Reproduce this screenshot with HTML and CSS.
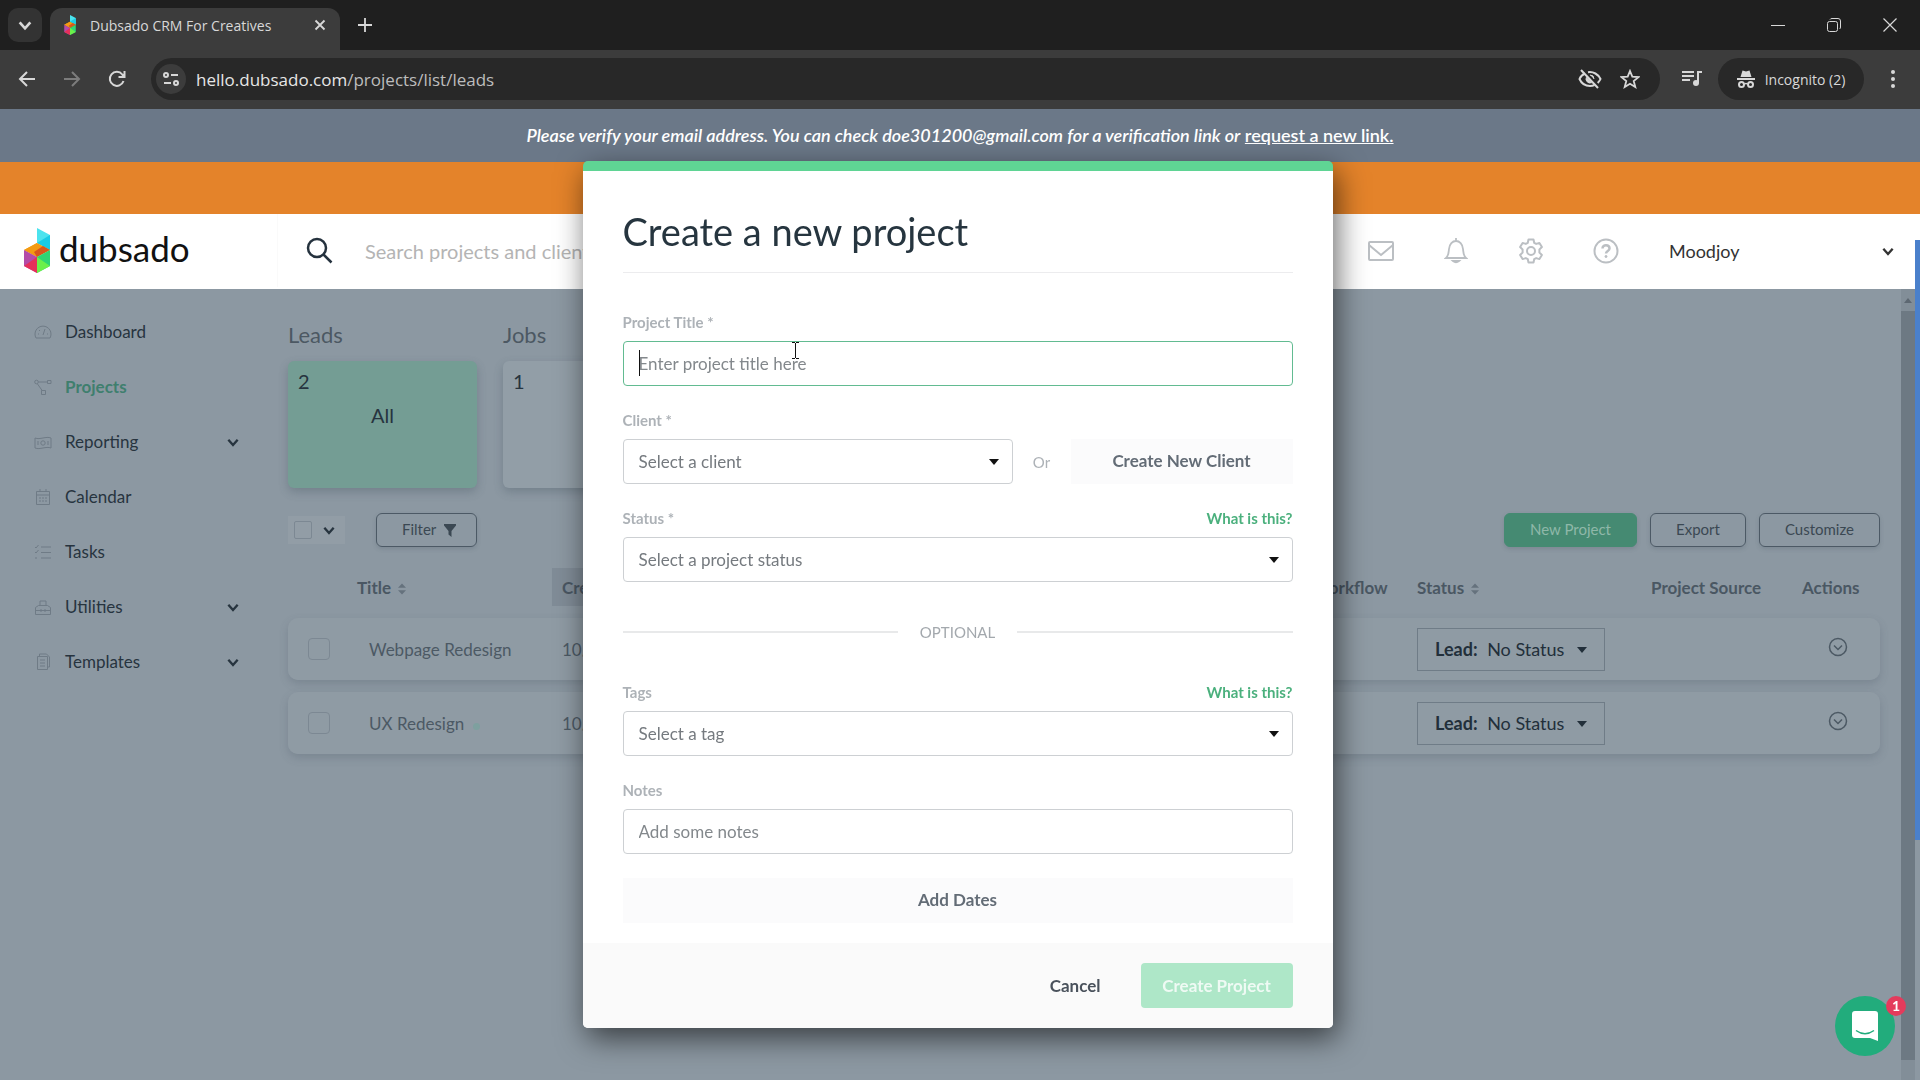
FILE: index.html
```html
<!DOCTYPE html>
<html lang="en">

<head>
    <meta charset="UTF-8">
    <meta name="viewport" content="width=device-width, initial-scale=1.0">
    <title>Dubsado CRM For Creatives</title>
    <link rel="stylesheet" href="styles.css">
</head>

<body>
    <!-- shared icons -->
    <svg class="defs" width="0" height="0" aria-hidden="true">
        <symbol id="chevron" viewBox="0 0 12 12">
            <path d="M2 4l4 4.500 4-4.500" fill="none" stroke="currentColor" stroke-width="2" />
        </symbol>
        <symbol id="logo" viewBox="0 0 26 45">
            <path d="M13 0l13 7v15l-13-7z" fill="#4be3ee" />
            <path d="M13 15L26 7v15z" fill="#19cbe6" />
            <path d="M0 22l13-7v14z" fill="#f5a20c" />
            <path d="M0 22l13-7 13 7-13 7z" fill="#f39a13" />
            <path d="M10 24l9-6 7 4-13 7z" fill="#d9561c" />
            <path d="M0 22l13 7v16L0 38z" fill="#b44ba8" />
            <path d="M0 38l13-9v16z" fill="#e6305a" />
            <path d="M13 29l13-7v16l-13 7z" fill="#2fd573" />
            <path d="M13 29l13 9-13 7z" fill="#6cf04a" />
        </symbol>
        <symbol id="sort" viewBox="0 0 10 14">
            <path d="M0 5.500L5 0l5 5.500zM0 8.500h10L5 14z" fill="currentColor" />
        </symbol>
        <symbol id="circle-down" viewBox="0 0 20 20">
            <circle cx="10" cy="10" r="8.500" fill="none" stroke="currentColor" stroke-width="1.500" />
            <path d="M6 8.500l4 4 4-4" fill="none" stroke="currentColor" stroke-width="1.500" />
        </symbol>
        <symbol id="caret" viewBox="0 0 10 6">
            <path d="M0 0h10L5 6z" fill="currentColor" />
        </symbol>
    </svg>

    <!-- browser window -->
    <div class="tabs">
        <button class="tab-search" aria-label="Search tabs"><svg width="16" height="16"><use href="#chevron" /></svg></button>
        <div class="tab">
            <svg class="favicon" width="12" height="20"><use href="#logo" /></svg>
            <span class="tab-title">Dubsado CRM For Creatives</span>
            <button class="icon-btn" aria-label="Close tab">
                <svg width="12" height="12" viewBox="0 0 12 12"><path d="M1.500 1.500l9 9M10.500 1.500l-9 9" stroke="currentColor" stroke-width="1.800" /></svg>
            </button>
        </div>
        <button class="icon-btn new-tab" aria-label="New tab">
            <svg width="14" height="14" viewBox="0 0 14 14"><path d="M7 0v14M0 7h14" stroke="currentColor" stroke-width="1.800" /></svg>
        </button>
        <div class="window-btns">
            <button class="icon-btn" aria-label="Minimize"><svg width="14" height="14" viewBox="0 0 14 14"><path d="M0 7.500h14" stroke="currentColor" /></svg></button>
            <button class="icon-btn" aria-label="Restore">
                <svg width="14" height="14" viewBox="0 0 14 14" fill="none" stroke="currentColor"><rect x=".5" y="3.500" width="10" height="10" rx="2" /><path d="M3 1.500Q3.500.500 5 .500h6q2.500 0 2.500 2.500v6q0 1.500-1 2" /></svg>
            </button>
            <button class="icon-btn" aria-label="Close"><svg width="14" height="14" viewBox="0 0 14 14"><path d="M.5.5l13 13M13.500.5l-13 13" stroke="currentColor" stroke-width="1.200" /></svg></button>
        </div>
    </div>
    <div class="toolbar">
        <button class="icon-btn" aria-label="Back">
            <svg width="18" height="16" viewBox="0 0 18 16" fill="none" stroke="currentColor" stroke-width="2"><path d="M17 8H2M9 1L2 8l7 7" /></svg>
        </button>
        <button class="icon-btn dim" aria-label="Forward" disabled>
            <svg width="18" height="16" viewBox="0 0 18 16" fill="none" stroke="currentColor" stroke-width="2"><path d="M1 8h15M9 1l7 7-7 7" /></svg>
        </button>
        <button class="icon-btn" aria-label="Reload">
            <svg width="18" height="18" viewBox="0 0 18 18" fill="none" stroke="currentColor" stroke-width="2"><path d="M15.500 11a7 7 0 1 1-1.200-6.500L16 6.500M16.500 1v6h-6" /></svg>
        </button>
        <div class="address">
            <button class="site-info" aria-label="View site information">
                <svg width="16" height="14" viewBox="0 0 16 14" fill="none" stroke="currentColor" stroke-width="2"><circle cx="3" cy="3" r="2" /><path d="M8 3h7M1 11h7" /><circle cx="13" cy="11" r="2" /></svg>
            </button>
            <span class="url"><b>hello.dubsado.com</b>/projects/list/leads</span>
            <button class="icon-btn" aria-label="Third-party cookies blocked">
                <svg width="24" height="22" viewBox="0 0 24 22" fill="none" stroke="currentColor" stroke-width="2"><path d="M7 5.500C4.500 6.500 2.500 8.500 1.500 11c2 4.500 6 7 10.500 7 1.500 0 3-.3 4.500-1M10 4.200c5.300-.8 10.300 2 12.500 6.800-.6 1.500-1.600 2.800-2.800 3.900" /><path d="M12 7a4 4 0 0 1 4 4M8.300 9.500A4 4 0 0 0 13.500 14.700L8.300 9.500z" fill="currentColor" stroke-width="1" /><path d="M3 2l17 18" /></svg>
            </button>
            <button class="icon-btn" aria-label="Bookmark this tab">
                <svg width="20" height="20" viewBox="0 0 20 20" fill="none" stroke="currentColor" stroke-width="1.800"><path d="M10 2l2.300 5.700 6.200.4-4.800 3.900 1.600 6-5.300-3.300-5.300 3.300 1.600-6L1.500 8.100l6.200-.4z" /></svg>
            </button>
        </div>
        <button class="icon-btn media" aria-label="Media controls">
            <svg width="20" height="18" viewBox="0 0 20 18"><path d="M0 2h12M0 6h12M0 10h8M16 13V2h4" fill="none" stroke="currentColor" stroke-width="2" /><circle cx="14" cy="13" r="3" fill="currentColor" /></svg>
        </button>
        <button class="incognito">
            <svg width="18" height="18" viewBox="0 0 18 18"><path d="M0 8h18v2H0zM3.500 7L5.500.500l3.500 1 3.500-1L14.500 7z" fill="currentColor" /><path d="M7.500 14q1.500-1 3 0" fill="none" stroke="currentColor" stroke-width="1.500" /><circle cx="4.500" cy="14.500" r="2.500" fill="none" stroke="currentColor" stroke-width="2" /><circle cx="13.500" cy="14.500" r="2.500" fill="none" stroke="currentColor" stroke-width="2" /></svg>
            Incognito (2)
        </button>
        <button class="icon-btn" aria-label="Menu">
            <svg width="4" height="18" viewBox="0 0 4 18" fill="currentColor"><circle cx="2" cy="2" r="2" /><circle cx="2" cy="9" r="2" /><circle cx="2" cy="16" r="2" /></svg>
        </button>
    </div>

    <!-- app -->
    <div class="verify"><span><em>Please verify your email address. You can check doe301200@gmail.com for a verification link or</em> <a href="#">request a new link.</a></span></div>
    <div class="notice"></div>
    <header class="header">
        <a class="brand" href="#">
            <svg width="26" height="45"><use href="#logo" /></svg>
            <span>dubsado</span>
        </a>
        <div class="search">
            <svg width="27" height="27" viewBox="0 0 27 27" fill="none" stroke="#25323e" stroke-width="2.500"><circle cx="11" cy="11" r="9" /><path d="M17.500 17.500l8 8" /></svg>
            <input type="text" placeholder="Search projects and clients" aria-label="Search projects and clients">
        </div>
        <nav class="header-icons">
            <a href="#" aria-label="Mail">
                <svg width="26" height="20" viewBox="0 0 26 20" fill="none" stroke="currentColor" stroke-width="2"><rect x="1" y="1" width="24" height="18" rx="1" /><path d="M1 4l12 10L25 4" /></svg>
            </a>
            <a href="#" aria-label="Notifications">
                <svg width="24" height="26" viewBox="0 0 24 26" fill="none" stroke="currentColor" stroke-width="1.800"><path d="M12 0v3M2 20c2.500-2 2.500-4.500 3-9 .4-5 3.500-8 7-8s6.600 3 7 8c.5 4.500.5 7 3 9z" /><path d="M9 23q3 2.500 6 0z" fill="currentColor" /></svg>
            </a>
            <a href="#" aria-label="Settings">
                <svg width="26" height="26" viewBox="0 0 26 26" fill="none" stroke="currentColor" stroke-width="2" stroke-linejoin="round"><circle cx="13" cy="13" r="4" /><path d="M10.500 1.500h5l.7 3.300 2 1.100 3.200-1 2.500 4.200-2.500 2.300v3.200l2.500 2.300-2.500 4.200-3.200-1-2 1.100-.7 3.300h-5l-.7-3.300-2-1.100-3.200 1-2.500-4.200 2.500-2.300v-3.200L2.100 9.100l2.500-4.200 3.200 1 2-1.100z" /></svg>
            </a>
            <a href="#" aria-label="Help">
                <svg width="26" height="26" viewBox="0 0 26 26" fill="none" stroke="currentColor" stroke-width="2"><circle cx="13" cy="13" r="11.500" /><path d="M9.500 10.500c0-4.500 7-4.300 7 0 0 2.500-3.500 2.500-3.500 5" stroke-width="2.500" /><circle cx="13" cy="18.500" r="1" fill="currentColor" stroke-width="1" /></svg>
            </a>
        </nav>
        <button class="account">Moodjoy <svg width="14" height="14"><use href="#chevron" /></svg></button>
    </header>

    <div class="app">
        <nav class="sidebar">
            <a href="#"><svg width="18" height="18" viewBox="0 0 18 18"><path d="M2 15a8 8 0 1 1 14 0zM9 12l2-6M4 11h1M5 7l1 1M13 11h1" /></svg><span>Dashboard</span></a>
            <a href="#" class="active"><svg width="18" height="18" viewBox="0 0 18 18"><circle cx="2.500" cy="4" r="1.800" /><path d="M4.500 4H14M3.500 6l5 7M13.500 2.500h3.500v3h-3.500zM7.500 12.500h4v4h-4z" /></svg><span>Projects</span></a>
            <a href="#"><svg width="18" height="18" viewBox="0 0 18 18"><path d="M1 5c5 2 11-2 16 0v10c-5-2-11 2-16 0z" /><circle cx="9" cy="10" r="2.200" /><path d="M4 8v4M14 8v4" /></svg><span>Reporting</span><svg class="arrow"><use href="#chevron" /></svg></a>
            <a href="#"><svg width="18" height="18" viewBox="0 0 18 18"><path d="M2.500 3.500h13v13h-13zM2.500 7h13M6 1v3M12 1v3M5 10h2M8 10h2M11 10h2M5 13h2M8 13h2M11 13h2" /></svg><span>Calendar</span></a>
            <a href="#"><svg width="18" height="18" viewBox="0 0 18 18"><path d="M1 4l1 1 2.500-3M1 9l1 1 2.500-3M1 15h2M7 4h10M7 9.500h10M7 15h10" /></svg><span>Tasks</span></a>
            <a href="#"><svg width="18" height="18" viewBox="0 0 18 18"><path d="M1.500 16.500h15v-7l-3-2h-9l-3 2zM1 12.500h16M6 7V3h6v4M7 11v3M11 11v3" /></svg><span>Utilities</span><svg class="arrow"><use href="#chevron" /></svg></a>
            <a href="#"><svg width="18" height="18" viewBox="0 0 18 18"><path d="M3.500 3.500v13h10v-13zM5.500 3V1h7l3 3v10h-2M6 7h5M6 10h5M6 13h5" /></svg><span>Templates</span><svg class="arrow"><use href="#chevron" /></svg></a>
        </nav>

        <main class="content">
            <div class="groups">
                <section>
                    <h2>Leads</h2>
                    <div class="stage selected"><span>2</span><b>All</b></div>
                </section>
                <section>
                    <h2>Jobs</h2>
                    <div class="stage"><span>1</span></div>
                </section>
            </div>

            <div class="actions">
                <div class="bulk">
                    <input type="checkbox" aria-label="Select all">
                    <svg width="14" height="14"><use href="#chevron" /></svg>
                </div>
                <button class="btn filter">Filter
                    <svg width="12" height="13" viewBox="0 0 12 13"><path d="M0 0h12v1.500L7.500 7v6l-3-2.500V7L0 1.500z" fill="currentColor" /></svg>
                </button>
                <div class="spacer"></div>
                <button class="btn primary">New Project</button>
                <button class="btn">Export</button>
                <button class="btn">Customize</button>
            </div>

            <table class="projects">
                <colgroup>
                    <col class="c-check">
                    <col class="c-title">
                    <col class="c-date">
                    <col>
                    <col class="c-flow">
                    <col class="c-status">
                    <col class="c-source">
                    <col class="c-actions">
                </colgroup>
                <thead>
                    <tr>
                        <th></th>
                        <th class="title">Title <svg width="8" height="12"><use href="#sort" /></svg></th>
                        <th class="sorted">Created</th>
                        <th></th>
                        <th>Workflow</th>
                        <th>Status <svg width="8" height="12"><use href="#sort" /></svg></th>
                        <th>Project Source</th>
                        <th>Actions</th>
                    </tr>
                </thead>
                <tbody>
                    <tr>
                        <td><input type="checkbox" aria-label="Select Webpage Redesign"></td>
                        <td class="title">Webpage Redesign</td>
                        <td>10/</td>
                        <td></td>
                        <td></td>
                        <td><button class="status"><b>Lead:</b> No Status <svg width="10" height="6"><use href="#caret" /></svg></button></td>
                        <td></td>
                        <td class="more"><button aria-label="Actions"><svg width="20" height="20"><use href="#circle-down" /></svg></button></td>
                    </tr>
                    <tr>
                        <td><input type="checkbox" aria-label="Select UX Redesign"></td>
                        <td class="title">UX Redesign <i class="dot"></i></td>
                        <td>10/</td>
                        <td></td>
                        <td></td>
                        <td><button class="status"><b>Lead:</b> No Status <svg width="10" height="6"><use href="#caret" /></svg></button></td>
                        <td></td>
                        <td class="more"><button aria-label="Actions"><svg width="20" height="20"><use href="#circle-down" /></svg></button></td>
                    </tr>
                </tbody>
            </table>
        </main>

        <div class="scrollbar"><svg width="8" height="5"><path d="M0 5l4-5 4 5z" fill="#5d6872" /></svg><div></div></div>
    </div>
    <div class="page-scroll"></div>

    <button class="chat" aria-label="Open chat">
        <svg width="28" height="30" viewBox="0 0 28 30"><path d="M4 0h20a3 3 0 0 1 3 3v27l-8-3H4a3 3 0 0 1-3-3V3a3 3 0 0 1 3-3z" fill="#fff" /><path d="M5 19.500q9 6.500 18 0" fill="none" stroke="#22ac7c" stroke-width="1.500" /></svg>
        <span>1</span>
    </button>

    <!-- new project dialog -->
    <div class="overlay">
        <form class="modal" role="dialog" aria-labelledby="modal-title">
            <div class="modal-body">
                <h1 id="modal-title">Create a new project</h1>

                <div class="field">
                    <div class="field-head"><label for="title">Project Title *</label></div>
                    <div class="text-wrap">
                        <input class="control focused" type="text" id="title" placeholder="Enter project title here">
                        <i class="text-caret"></i>
                        <svg class="pointer" width="7" height="17" viewBox="0 0 7 17"><path d="M0 .500h3M4 .500h3M3.500 1v15M0 16.500h3M4 16.500h3" stroke="#111" /></svg>
                    </div>
                </div>

                <div class="field">
                    <div class="field-head"><label for="client">Client *</label></div>
                    <div class="client-row">
                        <select class="control" id="client"><option>Select a client</option></select>
                        <span>Or</span>
                        <button type="button" class="light-btn">Create New Client</button>
                    </div>
                </div>

                <div class="field">
                    <div class="field-head"><label for="status">Status *</label><a href="#">What is this?</a></div>
                    <select class="control" id="status"><option>Select a project status</option></select>
                </div>

                <div class="optional">OPTIONAL</div>

                <div class="field">
                    <div class="field-head"><label for="tags">Tags</label><a href="#">What is this?</a></div>
                    <select class="control" id="tags"><option>Select a tag</option></select>
                </div>

                <div class="field">
                    <div class="field-head"><label for="notes">Notes</label></div>
                    <input class="control" type="text" id="notes" placeholder="Add some notes">
                </div>

                <button type="button" class="light-btn">Add Dates</button>
            </div>
            <div class="modal-footer">
                <button type="button" class="cancel">Cancel</button>
                <button type="submit" class="create" disabled>Create Project</button>
            </div>
        </form>
    </div>
</body>

</html>
```
FILE: styles.css
```css
* {
    margin: 0;
    padding: 0;
    box-sizing: border-box;
}

body {
    display: flex;
    flex-direction: column;
    height: 100vh;
    overflow: hidden;
    font-family: Lato, "Open Sans", sans-serif;
    font-size: 18px;
    color: #27343f;
    background: #8c98a2;
}

button,
input,
select {
    font: inherit;
    color: inherit;
    border: 0;
    background: none;
}

a {
    color: inherit;
    text-decoration: none;
}

svg {
    flex-shrink: 0;
}

.defs {
    position: absolute;
}

/* browser window */
.tabs,
.toolbar {
    display: flex;
    align-items: center;
    flex-shrink: 0;
    font-family: "Open Sans", "Noto Sans", sans-serif;
    color: #d8d8d8;
}

.tabs {
    height: 50px;
    padding: 8px 0 0 8px;
    background: #1f1f1f;
    font-size: 14px;
}

.tab-search {
    display: flex;
    align-items: center;
    justify-content: center;
    width: 34px;
    height: 34px;
    margin: 0 8px 8px 0;
    border-radius: 10px;
    background: #333;
}

.tab {
    display: flex;
    align-items: center;
    width: 290px;
    height: 42px;
    padding: 0 14px 8px;
    border-radius: 12px 12px 0 0;
    background: #3c3c3c;
}

.tab-title {
    flex: 1;
    padding-left: 14px;
    white-space: nowrap;
}

.icon-btn {
    display: flex;
    align-items: center;
    justify-content: center;
}

.new-tab {
    margin: 0 0 8px 18px;
}

.window-btns {
    display: flex;
    gap: 42px;
    margin: 0 23px 8px auto;
}

.toolbar {
    height: 59px;
    padding: 0 25px 1px 18px;
    gap: 27px;
    background: #3c3c3c;
}

.dim {
    color: #7c7c7c;
}

.address {
    display: flex;
    align-items: center;
    flex: 1;
    height: 42px;
    gap: 18px;
    margin-left: -2px;
    padding: 0 20px 0 5px;
    border-radius: 21px;
    background: #282828;
    font-size: 17px;
}

.site-info {
    display: flex;
    align-items: center;
    justify-content: center;
    width: 30px;
    height: 30px;
    border-radius: 50%;
    background: #3c3c3c;
}

.url {
    flex: 1;
    margin-left: -8px;
    color: #bdbdbd;
}

.url b {
    font-weight: 400;
    color: #e6e6e6;
}

.media {
    margin-left: -5px;
    margin-right: -11px;
}

.incognito {
    display: flex;
    align-items: center;
    justify-content: center;
    gap: 10px;
    width: 146px;
    height: 42px;
    border-radius: 21px;
    background: #282828;
    font-size: 14px;
}

/* banners */
.verify {
    display: flex;
    align-items: center;
    justify-content: center;
    flex-shrink: 0;
    height: 53px;
    padding-bottom: 2px;
    background: #6b7888;
    color: #fff;
    font-weight: 600;
}

.verify a {
    text-decoration: underline;
}

.notice {
    flex-shrink: 0;
    height: 52px;
    background: #e4832a;
}

/* header */
.header {
    display: flex;
    align-items: center;
    flex-shrink: 0;
    height: 75px;
    padding: 0 5px 2px 0;
    background: #fff;
}

.brand {
    display: flex;
    align-items: center;
    gap: 9px;
    width: 278px;
    height: 100%;
    padding-left: 24px;
    border-right: 1px solid #fafafa;
    font-size: 35px;
    color: #111;
}

.brand span {
    padding-bottom: 6px;
}

.search {
    display: flex;
    align-items: center;
    flex: 1;
    gap: 32px;
    padding-left: 28px;
}

.search input {
    flex: 1;
    font-size: 20px;
}

.search input::placeholder {
    color: #b4b4b4;
}

.header-icons {
    display: flex;
    color: #bbbfc3;
}

.header-icons a {
    display: flex;
    align-items: center;
    justify-content: center;
    width: 75px;
}

.account {
    display: flex;
    align-items: center;
    justify-content: space-between;
    width: 272px;
    padding: 0 20px 0 26px;
    color: #333;
}

/* page */
.app {
    display: flex;
    flex: 1;
    min-height: 0;
    padding-right: 5px;
}

.sidebar {
    display: flex;
    flex-direction: column;
    width: 288px;
    padding: 15px 48px 0 34px;
}

.sidebar a {
    display: flex;
    align-items: center;
    gap: 13px;
    height: 55px;
    font-size: 17px;
}

.sidebar svg {
    fill: none;
    stroke: #6f7b86;
    stroke-width: 1;
}

.sidebar span {
    flex: 1;
}

.sidebar .arrow {
    width: 14px;
    height: 14px;
}

.sidebar .active {
    color: #3f7f6e;
    font-weight: 700;
}

.content {
    flex: 1;
    padding: 30px 21px 0 0;
}

.groups {
    display: flex;
    gap: 26px;
}

.groups h2 {
    height: 42px;
    line-height: 32px;
    font-size: 22px;
    font-weight: 400;
    color: #4c5863;
}

.stage {
    display: flex;
    flex-direction: column;
    align-items: center;
    gap: 10px;
    width: 189px;
    height: 127px;
    padding: 8px 10px;
    border-radius: 6px;
    background: #929ea7;
    box-shadow: 0 4px 10px rgba(60, 75, 90, .3);
    font-size: 20px;
}

.stage span {
    align-self: flex-start;
}

.stage b {
    font-weight: 400;
}

.stage.selected {
    background: #749d94;
}

.actions {
    display: flex;
    align-items: center;
    gap: 13px;
    margin-top: 25px;
}

.bulk {
    display: flex;
    align-items: center;
    gap: 10px;
    width: 57px;
    height: 28px;
    margin-right: 18px;
    padding-left: 6px;
    background: #929da6;
}

input[type=checkbox] {
    appearance: none;
    width: 22px;
    height: 22px;
    border: 1px solid #7c8893;
    border-radius: 4px;
}

.bulk input[type=checkbox] {
    width: 18px;
    height: 18px;
    border-radius: 2px;
}

.btn {
    height: 34px;
    padding: 0 25px 2px;
    border: 1px solid #4c5965;
    border-radius: 6px;
    box-shadow: 0 2px 4px rgba(60, 75, 90, .2);
    font-size: 15px;
    color: #3b4853;
}

.btn svg {
    margin-left: 4px;
    vertical-align: -2px;
}

.filter {
    padding-right: 20px;
}

.primary {
    border-color: #458a72;
    background: #458a72;
    color: #8fb8a9;
}

.spacer {
    flex: 1;
}

.projects {
    width: 100%;
    margin-top: 9px;
    table-layout: fixed;
    border-collapse: separate;
    border-spacing: 0 12px;
    font-size: 17px;
    text-align: left;
}

.c-check {
    width: 61px;
}

.c-title {
    width: 203px;
}

.c-date {
    width: 160px;
}

.c-flow {
    width: 105px;
}

.c-status {
    width: 234px;
}

.c-source {
    width: 151px;
}

.c-actions {
    width: 88px;
}

.projects th {
    height: 38px;
    padding-left: 10px;
    color: #4a5763;
    white-space: nowrap;
}

.projects th svg {
    margin-left: 3px;
    color: #65727d;
    vertical-align: -1px;
}

.projects th.title {
    padding-left: 8px;
}

.projects .sorted {
    background: #808c97;
}

.projects tbody tr {
    border-radius: 10px;
    box-shadow: 0 4px 8px rgba(70, 84, 98, .25);
}

.projects td {
    height: 62px;
    padding-left: 10px;
    background: #8f9ba4;
    color: #4c5964;
}

.projects td:first-child {
    padding-left: 20px;
    border-radius: 10px 0 0 10px;
}

.projects td:last-child {
    border-radius: 0 10px 10px 0;
}

.projects td.title {
    padding-left: 20px;
}

.projects input {
    display: block;
}

.dot {
    display: inline-block;
    width: 7px;
    height: 7px;
    margin-left: 4px;
    border-radius: 50%;
    background: #7ea09f;
}

.status {
    height: 43px;
    width: 188px;
    border: 1px solid #6f7c87;
    font-size: 18px;
    color: #222f3a;
}

.status b {
    margin-right: 5px;
}

.status svg {
    margin-left: 8px;
    vertical-align: 3px;
}

.projects .more {
    padding-left: 36px;
}

.scrollbar {
    display: flex;
    flex-direction: column;
    align-items: center;
    gap: 8px;
    width: 14px;
    padding: 9px 0 20px;
    background: #828e98;
}

.scrollbar div {
    flex: 1;
    width: 100%;
    background: #6d7983;
}

.page-scroll {
    position: fixed;
    top: 240px;
    right: 0;
    width: 5px;
    height: 600px;
    background: #4a80cb;
}

.chat {
    position: fixed;
    right: 25px;
    bottom: 24px;
    display: flex;
    align-items: center;
    justify-content: center;
    width: 60px;
    height: 60px;
    border-radius: 50%;
    background: #22ac7c;
}

.chat span {
    position: absolute;
    top: 0;
    right: -11px;
    width: 20px;
    border-radius: 50%;
    background: #e43b5c;
    color: #fff;
    font-size: 14px;
    font-weight: 700;
    line-height: 20px;
}

/* dialog */
.overlay {
    position: fixed;
    inset: 0;
    display: flex;
    align-items: flex-start;
    justify-content: center;
    padding: 161px 5px 0 0;
}

.modal {
    width: 750px;
    border-top: 10px solid #5fd494;
    border-radius: 5px;
    background: #fff;
    box-shadow: 4px 10px 30px rgba(0, 0, 0, .6);
}

.modal-body {
    padding: 36px 40px 20px;
}

.modal h1 {
    margin-bottom: 39px;
    padding-bottom: 17px;
    border-bottom: 1px solid #ececee;
    font-size: 38px;
    font-weight: 400;
    line-height: 48px;
    color: #26353f;
}

.field {
    margin-bottom: 24px;
}

.field-head {
    display: flex;
    justify-content: space-between;
    margin-bottom: 8px;
    font-size: 15px;
    font-weight: 700;
    line-height: 21px;
    color: #adb2b7;
}

.field-head a {
    color: #4bb07d;
}

.control {
    display: block;
    width: 100%;
    height: 45px;
    padding: 0 15px;
    border: 1px solid #cdd0d3;
    border-radius: 4px;
    font-size: 17px;
    color: #757a7f;
}

.control::placeholder {
    color: #83888c;
}

.control:focus {
    outline: none;
}

.focused {
    border-color: #62bb91;
}

select.control {
    appearance: none;
    background: url("data:image/svg+xml,%3Csvg xmlns='http://www.w3.org/2000/svg' width='10' height='6'%3E%3Cpath d='M0 0h10L5 6z' fill='%23111'/%3E%3C/svg%3E") no-repeat right 13px center;
}

.text-wrap {
    position: relative;
}

.text-caret {
    position: absolute;
    top: 9px;
    left: 16px;
    width: 1px;
    height: 26px;
    background: #111;
}

.pointer {
    position: absolute;
    top: 1px;
    left: 169px;
}

.client-row {
    display: flex;
    align-items: center;
}

.client-row .control {
    flex: 1;
}

.client-row span {
    width: 58px;
    text-align: center;
    font-size: 15px;
    color: #adb2b7;
}

.client-row .light-btn {
    width: 222px;
}

.light-btn {
    width: 100%;
    height: 45px;
    padding-bottom: 2px;
    background: #fbfbfc;
    font-size: 17px;
    font-weight: 700;
    color: #636c76;
}

.optional {
    display: flex;
    align-items: center;
    gap: 22px;
    margin: 40px 0;
    font-size: 15px;
    line-height: 20px;
    color: #a3a8ad;
}

.optional::before,
.optional::after {
    content: "";
    flex: 1;
    height: 2px;
    background: #e8e9ea;
}

.modal-footer {
    display: flex;
    justify-content: flex-end;
    gap: 40px;
    padding: 20px 40px;
    border-radius: 0 0 5px 5px;
    background: #fafafa;
    font-size: 17px;
    font-weight: 700;
}

.cancel {
    color: #4a525c;
}

.create {
    height: 45px;
    min-width: 152px;
    border-radius: 4px;
    background: #aee7c8;
    color: #effaf4;
}
```
